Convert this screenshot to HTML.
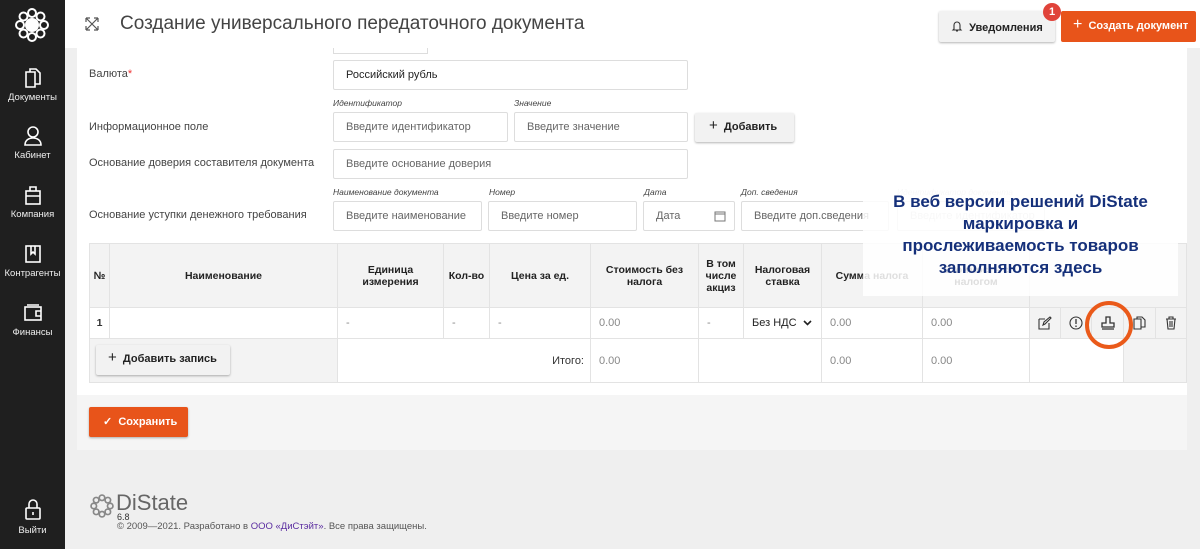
<!DOCTYPE html>
<html><head><meta charset="utf-8"><style>
*{box-sizing:border-box;margin:0;padding:0}
body{width:1200px;height:549px;overflow:hidden;background:#efefef;font-family:"Liberation Sans",Arial,sans-serif;font-size:11px;color:#333;position:relative}
.a{position:absolute}
.sb{left:0;top:0;width:65px;height:549px;background:#1f1f1f;color:#fff}
.nav{position:absolute;left:0;width:65px;text-align:center;font-size:9.5px;color:#eee}
.hdr{left:65px;top:0;width:1135px;height:48px;background:#fff}
.panel{left:77px;top:48px;width:1110px;height:347px;background:#fff}
.lbl{font-size:11px;color:#444;white-space:nowrap}
.inp{border:1px solid #ddd;border-radius:2px;background:#fff;height:30px;padding:8px 12px;font-size:11px;color:#666;white-space:nowrap;overflow:hidden}
.sm{font-size:8.5px;font-style:italic;color:#444}
.btn{background:#f2f2f2;border-radius:2px;box-shadow:0 1px 2px rgba(0,0,0,.3);font-weight:bold;font-size:11px;color:#222;white-space:nowrap}
.c{position:absolute;border-right:1px solid #e3e3e3;border-bottom:1px solid #e3e3e3;display:flex;align-items:center;justify-content:center;text-align:center;font-size:10.5px}
.h{background:#f3f3f3;font-weight:bold;color:#222}
.v{justify-content:flex-start;padding-left:8px;color:#888;font-size:11px}
</style></head><body>
<div class="a sb">
<svg class="a" style="left:13px;top:8px" width="38" height="34" viewBox="0 0 38 34"><g fill="none" stroke="#fff" stroke-width="2"><circle cx="19" cy="17" r="6" fill="#fff"/><g><circle cx="19" cy="5" r="4"/><circle cx="27.5" cy="8.5" r="4"/><circle cx="31" cy="17" r="4"/><circle cx="27.5" cy="25.5" r="4"/><circle cx="19" cy="29" r="4"/><circle cx="10.5" cy="25.5" r="4"/><circle cx="7" cy="17" r="4"/><circle cx="10.5" cy="8.5" r="4"/></g></g></svg>
<div class="nav" style="top:67px"><svg width="20" height="22" viewBox="0 0 20 22"><g fill="none" stroke="#fff" stroke-width="1.6"><path d="M3 5h9v15H3z"/><path d="M7 5V2h6l4 4v11h-5"/></g></svg><div>Документы</div></div>
<div class="nav" style="top:125px"><svg width="20" height="22" viewBox="0 0 20 22"><g fill="none" stroke="#fff" stroke-width="1.6"><circle cx="10" cy="7" r="5"/><path d="M2 20c0-5 4-7 8-7s8 2 8 7z"/></g></svg><div>Кабинет</div></div>
<div class="nav" style="top:184px"><svg width="20" height="22" viewBox="0 0 20 22"><g fill="none" stroke="#fff" stroke-width="1.6"><rect x="3" y="7" width="14" height="13"/><path d="M3 12h14M7 7V3h6v4"/></g></svg><div>Компания</div></div>
<div class="nav" style="top:243px"><svg width="20" height="22" viewBox="0 0 20 22"><g fill="none" stroke="#fff" stroke-width="1.6"><rect x="3" y="3" width="14" height="16"/><path d="M8 3v8l2-2 2 2V3"/></g></svg><div>Контрагенты</div></div>
<div class="nav" style="top:302px"><svg width="20" height="22" viewBox="0 0 20 22"><g fill="none" stroke="#fff" stroke-width="1.6"><rect x="2" y="5" width="16" height="13"/><path d="M18 9h-5v5h5M4 3h12"/></g></svg><div>Финансы</div></div>
<div class="nav" style="top:498px"><svg width="20" height="24" viewBox="0 0 20 24"><g fill="none" stroke="#fff" stroke-width="1.6"><rect x="3" y="10" width="14" height="11" rx="1"/><path d="M6 10V6a4 4 0 0 1 8 0v4M10 14v3"/></g></svg><div>Выйти</div></div>
</div>
<div class="a hdr">
<svg class="a" style="left:20px;top:17px" width="14" height="14" viewBox="0 0 14 14"><path d="M1 1l12 12M13 1L1 13M1 1h4M1 1v4M13 1h-4M13 1v4M1 13h4M1 13v-4M13 13h-4M13 13v-4" stroke="#555" stroke-width="1.2" fill="none"/></svg>
<div class="a" style="left:55px;top:13px;font-size:19px;color:#444">Создание универсального передаточного документа</div>
<div class="a btn" style="left:874px;top:11px;width:116px;height:31px;padding:9px 0 0 12px"><svg width="12" height="12" viewBox="0 0 12 12" style="vertical-align:-1px"><path d="M3 9V5a3 3 0 0 1 6 0v4l1 1H2zM5 11h2" fill="none" stroke="#333" stroke-width="1.1"/></svg> &nbsp;Уведомления</div>
<div class="a" style="left:978px;top:3px;width:18px;height:18px;border-radius:9px;background:#e0433a;color:#fff;font-size:11px;font-weight:bold;text-align:center;line-height:18px">1</div>
<div class="a" style="left:996px;top:11px;width:135px;height:31px;background:#e8541a;color:#fff;font-weight:bold;padding:9px 0 0 12px;border-radius:2px;white-space:nowrap;font-size:11px"><span style="font-weight:normal;font-size:16px;line-height:10px">+</span> &nbsp;Создать документ</div>
</div>
<div class="a panel"></div>
<div class="a" style="left:333px;top:48px;width:95px;height:6px;border:1px solid #ddd;border-top:0"></div>
<div class="a lbl" style="left:89px;top:68px">Валюта<span style="color:#e33">*</span></div>
<div class="a inp" style="left:333px;top:60px;width:355px;color:#222">Российский рубль</div>
<div class="a sm" style="left:333px;top:98px">Идентификатор</div>
<div class="a sm" style="left:514px;top:98px">Значение</div>
<div class="a lbl" style="left:89px;top:121px">Информационное поле</div>
<div class="a inp" style="left:333px;top:112px;width:175px">Введите идентификатор</div>
<div class="a inp" style="left:514px;top:112px;width:174px">Введите значение</div>
<div class="a btn" style="left:695px;top:113px;width:99px;height:29px;padding:8px 0 0 14px"><span style="font-weight:normal;font-size:15px;line-height:10px">+</span> &nbsp;Добавить</div>
<div class="a lbl" style="left:89px;top:157px">Основание доверия составителя документа</div>
<div class="a inp" style="left:333px;top:149px;width:355px">Введите основание доверия</div>
<div class="a sm" style="left:333px;top:187px">Наименование документа</div>
<div class="a sm" style="left:489px;top:187px">Номер</div>
<div class="a sm" style="left:644px;top:187px">Дата</div>
<div class="a sm" style="left:741px;top:187px">Доп. сведения</div>
<div class="a lbl" style="left:89px;top:209px">Основание уступки денежного требования</div>
<div class="a inp" style="left:333px;top:201px;width:149px">Введите наименование</div>
<div class="a inp" style="left:488px;top:201px;width:149px">Введите номер</div>
<div class="a inp" style="left:643px;top:201px;width:92px">Дата<svg style="position:absolute;right:8px;top:8px" width="12" height="12" viewBox="0 0 12 12"><path d="M1 2h10v9H1zM1 4h10" fill="none" stroke="#777"/></svg></div>
<div class="a inp" style="left:741px;top:201px;width:148px">Введите доп.сведения</div>
<div class="a sm" style="left:897px;top:187px;color:#ccc">Идентификатор документа</div>
<div class="a inp" style="left:897px;top:201px;width:148px;color:#ccc">Введите идентификатор</div>
<div class="a" style="left:89px;top:243px;width:1098px;height:140px;border-left:1px solid #e3e3e3;border-top:1px solid #e3e3e3"></div>
<div class="c h" style="left:90px;top:244px;width:20px;height:64px">№</div>
<div class="c h" style="left:110px;top:244px;width:228px;height:64px">Наименование</div>
<div class="c h" style="left:338px;top:244px;width:106px;height:64px">Единица<br>измерения</div>
<div class="c h" style="left:444px;top:244px;width:46px;height:64px">Кол-во</div>
<div class="c h" style="left:490px;top:244px;width:101px;height:64px">Цена за ед.</div>
<div class="c h" style="left:591px;top:244px;width:108px;height:64px">Стоимость без<br>налога</div>
<div class="c h" style="left:699px;top:244px;width:45px;height:64px">В том<br>числе<br>акциз</div>
<div class="c h" style="left:744px;top:244px;width:78px;height:64px">Налоговая<br>ставка</div>
<div class="c h" style="left:822px;top:244px;width:101px;height:64px">Сумма налога</div>
<div class="c h" style="left:923px;top:244px;width:107px;height:64px">Стоимость с<br>налогом</div>
<div class="c h" style="left:1030px;top:244px;width:157px;height:64px"></div>
<div class="c" style="left:90px;top:308px;width:20px;height:31px;font-weight:bold">1</div>
<div class="c" style="left:110px;top:308px;width:228px;height:31px"></div>
<div class="c v" style="left:338px;top:308px;width:106px;height:31px">-</div>
<div class="c v" style="left:444px;top:308px;width:46px;height:31px">-</div>
<div class="c v" style="left:490px;top:308px;width:101px;height:31px">-</div>
<div class="c v" style="left:591px;top:308px;width:108px;height:31px">0.00</div>
<div class="c v" style="left:699px;top:308px;width:45px;height:31px">-</div>
<div class="c v" style="left:744px;top:308px;width:78px;height:31px;color:#222">Без НДС &nbsp;<svg width="9" height="6" viewBox="0 0 9 6"><path d="M1 1l3.5 3.5L8 1" fill="none" stroke="#222" stroke-width="1.6"/></svg></div>
<div class="c v" style="left:822px;top:308px;width:101px;height:31px">0.00</div>
<div class="c v" style="left:923px;top:308px;width:107px;height:31px">0.00</div>
<div class="c" style="left:1030px;top:308px;width:31px;height:31px;background:#f3f3f3"><svg width="14" height="14" viewBox="0 0 14 14"><path d="M1 3h6M1 3v10h10V7M5 9l1-3 6-5 1 1-6 6z" fill="none" stroke="#333" stroke-width="1.1"/></svg></div>
<div class="c" style="left:1061px;top:308px;width:31px;height:31px;background:#f3f3f3"><svg width="14" height="14" viewBox="0 0 14 14"><circle cx="7" cy="7" r="6" fill="none" stroke="#333" stroke-width="1.1"/><path d="M7 3v5M7 9.5v1.5" stroke="#333" stroke-width="1.3"/></svg></div>
<div class="c" style="left:1092px;top:308px;width:32px;height:31px;background:#f3f3f3"><svg width="16" height="16" viewBox="0 0 16 16"><path d="M6 2h4v6h4v4H2V8h4zM2 14h12" fill="none" stroke="#333" stroke-width="1.3"/></svg></div>
<div class="c" style="left:1124px;top:308px;width:32px;height:31px;background:#f3f3f3"><svg width="14" height="14" viewBox="0 0 14 14"><path d="M1 3h7v10H1zM4 3V1h5l3 3v7H8" fill="none" stroke="#333" stroke-width="1.1"/></svg></div>
<div class="c" style="left:1156px;top:308px;width:31px;height:31px;background:#f3f3f3"><svg width="12" height="14" viewBox="0 0 12 14"><path d="M1 3h10M4 3V1h4v2M2 3l1 10h6l1-10M5 5v6M7 5v6" fill="none" stroke="#333" stroke-width="1.1"/></svg></div>
<div class="c" style="left:90px;top:339px;width:248px;height:44px;background:#f3f3f3"></div>
<div class="a btn" style="left:96px;top:345px;width:134px;height:30px;padding:8px 0 0 12px"><span style="font-weight:normal;font-size:15px;line-height:10px">+</span> &nbsp;Добавить запись</div>
<div class="c" style="left:338px;top:339px;width:253px;height:44px;justify-content:flex-end;padding-right:6px;font-size:11px">Итого:</div>
<div class="c v" style="left:591px;top:339px;width:108px;height:44px">0.00</div>
<div class="c" style="left:699px;top:339px;width:123px;height:44px"></div>
<div class="c v" style="left:822px;top:339px;width:101px;height:44px">0.00</div>
<div class="c v" style="left:923px;top:339px;width:107px;height:44px">0.00</div>
<div class="c" style="left:1030px;top:339px;width:94px;height:44px"></div>
<div class="c" style="left:1124px;top:339px;width:63px;height:44px;background:#f3f3f3"></div>
<div class="a" style="left:863px;top:184px;width:315px;height:112px;background:rgba(255,255,255,.85)"></div>
<div class="a" style="left:863px;top:191px;width:315px;text-align:center;font-size:17px;line-height:22px;font-weight:bold;color:#15307a">В веб версии решений DiState<br>маркировка и<br>прослеживаемость товаров<br>заполняются здесь</div>
<div class="a" style="left:1085px;top:301px;width:48px;height:48px;border:4px solid #ea5a1a;border-radius:50%"></div>
<div class="a" style="left:89px;top:407px;width:99px;height:30px;background:#e8541a;color:#fff;font-weight:bold;padding:8px 0 0 14px;border-radius:2px;box-shadow:0 1px 2px rgba(0,0,0,.3);font-size:11px">✓ &nbsp;Сохранить</div>
<div class="a" style="left:77px;top:395px;width:1110px;height:55px;background:#f5f5f5;z-index:-1"></div>
<svg class="a" style="left:89px;top:493px" width="26" height="26" viewBox="0 0 38 34"><g fill="none" stroke="#888" stroke-width="2.5"><circle cx="19" cy="5" r="4"/><circle cx="27.5" cy="8.5" r="4"/><circle cx="31" cy="17" r="4"/><circle cx="27.5" cy="25.5" r="4"/><circle cx="19" cy="29" r="4"/><circle cx="10.5" cy="25.5" r="4"/><circle cx="7" cy="17" r="4"/><circle cx="10.5" cy="8.5" r="4"/></g></svg>
<div class="a" style="left:116px;top:490px;font-size:22px;color:#666">DiState</div>
<div class="a" style="left:117px;top:512px;font-size:9px;color:#333">6.8</div>
<div class="a" style="left:117px;top:521px;font-size:9.5px;color:#555">© 2009—2021. Разработано в <span style="color:#5a2ca0">ООО «ДиСтэйт»</span>. Все права защищены.</div>
</body></html>
